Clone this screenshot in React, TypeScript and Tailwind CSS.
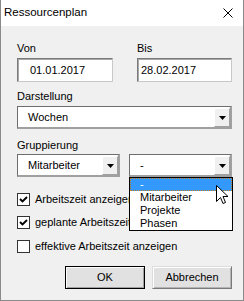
import React from 'react';

// Classic Windows dialog: "Ressourcenplan"

const sunken =
  'border border-t-[#7a7a7a] border-l-[#7a7a7a] border-r-[#c8c8c8] border-b-[#c8c8c8] bg-white';

function TextField({ value, className = '' }: { value: string; className?: string }) {
  return (
    <div className={`${sunken} h-[24px] flex items-center shadow-[inset_1px_1px_0_#a8a8a8] ${className}`}>
      {value}
    </div>
  );
}

function Arrow() {
  return (
    <svg width="7" height="4" viewBox="0 0 7 4" className="block">
      <path d="M0 0H7L3.5 4Z" fill="#000" />
    </svg>
  );
}

function Combo({ value, className = '' }: { value: string; className?: string }) {
  return (
    <div
      className={`h-[23px] flex bg-white border-t border-l border-r-2 border-b-2 border-t-[#6e6e6e] border-l-[#6e6e6e] border-r-[#a0a0a0] border-b-[#a0a0a0] ${className}`}
    >
      <div className="flex-1 flex items-center pl-[10px] truncate">{value}</div>
      <div className="w-[16px] m-[1px] mr-0 mb-0 flex items-center justify-center bg-[#f0f0f0] border-t border-l border-r border-b border-t-white border-l-white border-r-[#a0a0a0] border-b-[#a0a0a0]">
        <Arrow />
      </div>
    </div>
  );
}

function Check({ checked, label, className = '' }: { checked?: boolean; label: string; className?: string }) {
  return (
    <div className={`flex items-center gap-[5px] h-[13px] ${className}`}>
      <div className="w-[13px] h-[13px] border border-[#333] bg-white shrink-0">
        {checked && (
          <svg width="11" height="11" viewBox="0 0 11 11" className="block">
            <path d="M2 5 L4.5 7.5 L9 3" stroke="#000" strokeWidth="1.9" fill="none" />
          </svg>
        )}
      </div>
      <span className="leading-[13px] whitespace-nowrap -mt-px">{label}</span>
    </div>
  );
}

function WinButton({ label, isDefault }: { label: string; isDefault?: boolean }) {
  return (
    <button
      className={`h-[23px] w-[80px] bg-[#e1e1e1] flex items-center justify-center border ${
        isDefault
          ? 'border-black shadow-[inset_1px_1px_0_#fff,inset_-1px_-1px_0_#a0a0a0]'
          : 'border-t-[#dcdcdc] border-l-[#dcdcdc] border-r-[#7a7a7a] border-b-[#7a7a7a] shadow-[inset_1px_1px_0_#fff,inset_-1px_-1px_0_#b4b4b4]'
      }`}
    >
      {label}
    </button>
  );
}

export default function App() {
  const options = ['-', 'Mitarbeiter', 'Projekte', 'Phasen'];

  return (
    <div className="relative w-[244px] h-[301px] bg-[#f0f0f0] border border-t-0 border-[#8a8a8a] flex flex-col text-[11px] text-black font-['Liberation_Sans',Arial,sans-serif] overflow-hidden">
      {/* title bar */}
      <div className="h-[26px] bg-white flex items-center justify-between pl-[3px] pr-[10px] shrink-0">
        <span className="text-[11.5px]">Ressourcenplan</span>
        <svg width="10" height="10" viewBox="0 0 10 10" className="block">
          <path d="M0.5 0.5L9.5 9.5M9.5 0.5L0.5 9.5" stroke="#000" strokeWidth="1" />
        </svg>
      </div>

      <div className="flex-1 flex flex-col pl-[16px] pr-[11px] pt-[16px]">
        <div className="grid grid-cols-[96px_95px] gap-x-[24px]">
          <div>
            <div className="leading-[13px]">Von</div>
            <TextField value="01.01.2017" className="mt-[3px] pl-[12px]" />
          </div>
          <div>
            <div className="leading-[13px]">Bis</div>
            <TextField value="28.02.2017" className="mt-[3px] pl-[3px]" />
          </div>
        </div>

        <div className="leading-[13px] mt-[8px]">Darstellung</div>
        <Combo value="Wochen" className="mt-[3px] w-full" />

        <div className="leading-[13px] mt-[10px]">Gruppierung</div>
        <div className="flex gap-[9px] mt-[2px]">
          <Combo value="Mitarbeiter" className="w-[103px]" />
          <div className="relative w-[103px]">
            <Combo value="-" className="w-full" />
            <div className="absolute z-10 top-full left-0 w-[104px] bg-white border border-black">
              {options.map((o, i) => (
                <div
                  key={o}
                  className={`h-[13px] leading-[13px] pl-[10px] ${
                    i === 0 ? 'bg-[#3399ff] text-white outline outline-1 outline-dotted outline-[#c07a20] -outline-offset-1' : ''
                  }`}
                >
                  {o}
                </div>
              ))}
            </div>
          </div>
        </div>

        <Check checked label="Arbeitszeit anzeigen" className="mt-[16px]" />
        <Check checked label="geplante Arbeitszeit anzeigen" className="mt-[10px]" />
        <Check label="effektive Arbeitszeit anzeigen" className="mt-[11px]" />

        <div className="flex justify-end gap-[7px] mt-[13px]">
          <WinButton label="OK" isDefault />
          <WinButton label="Abbrechen" />
        </div>
      </div>

      {/* mouse pointer over the list */}
      <svg
        width="13"
        height="20"
        viewBox="0 0 13 20"
        className="absolute left-[215px] top-[185px] z-20"
      >
        <path
          d="M0.5 0.5V16.5L4.5 12.5L7 18.5L9.5 17.5L7 11.5H12Z"
          fill="#fff"
          stroke="#000"
          strokeWidth="1"
          strokeLinejoin="miter"
        />
      </svg>
    </div>
  );
}
